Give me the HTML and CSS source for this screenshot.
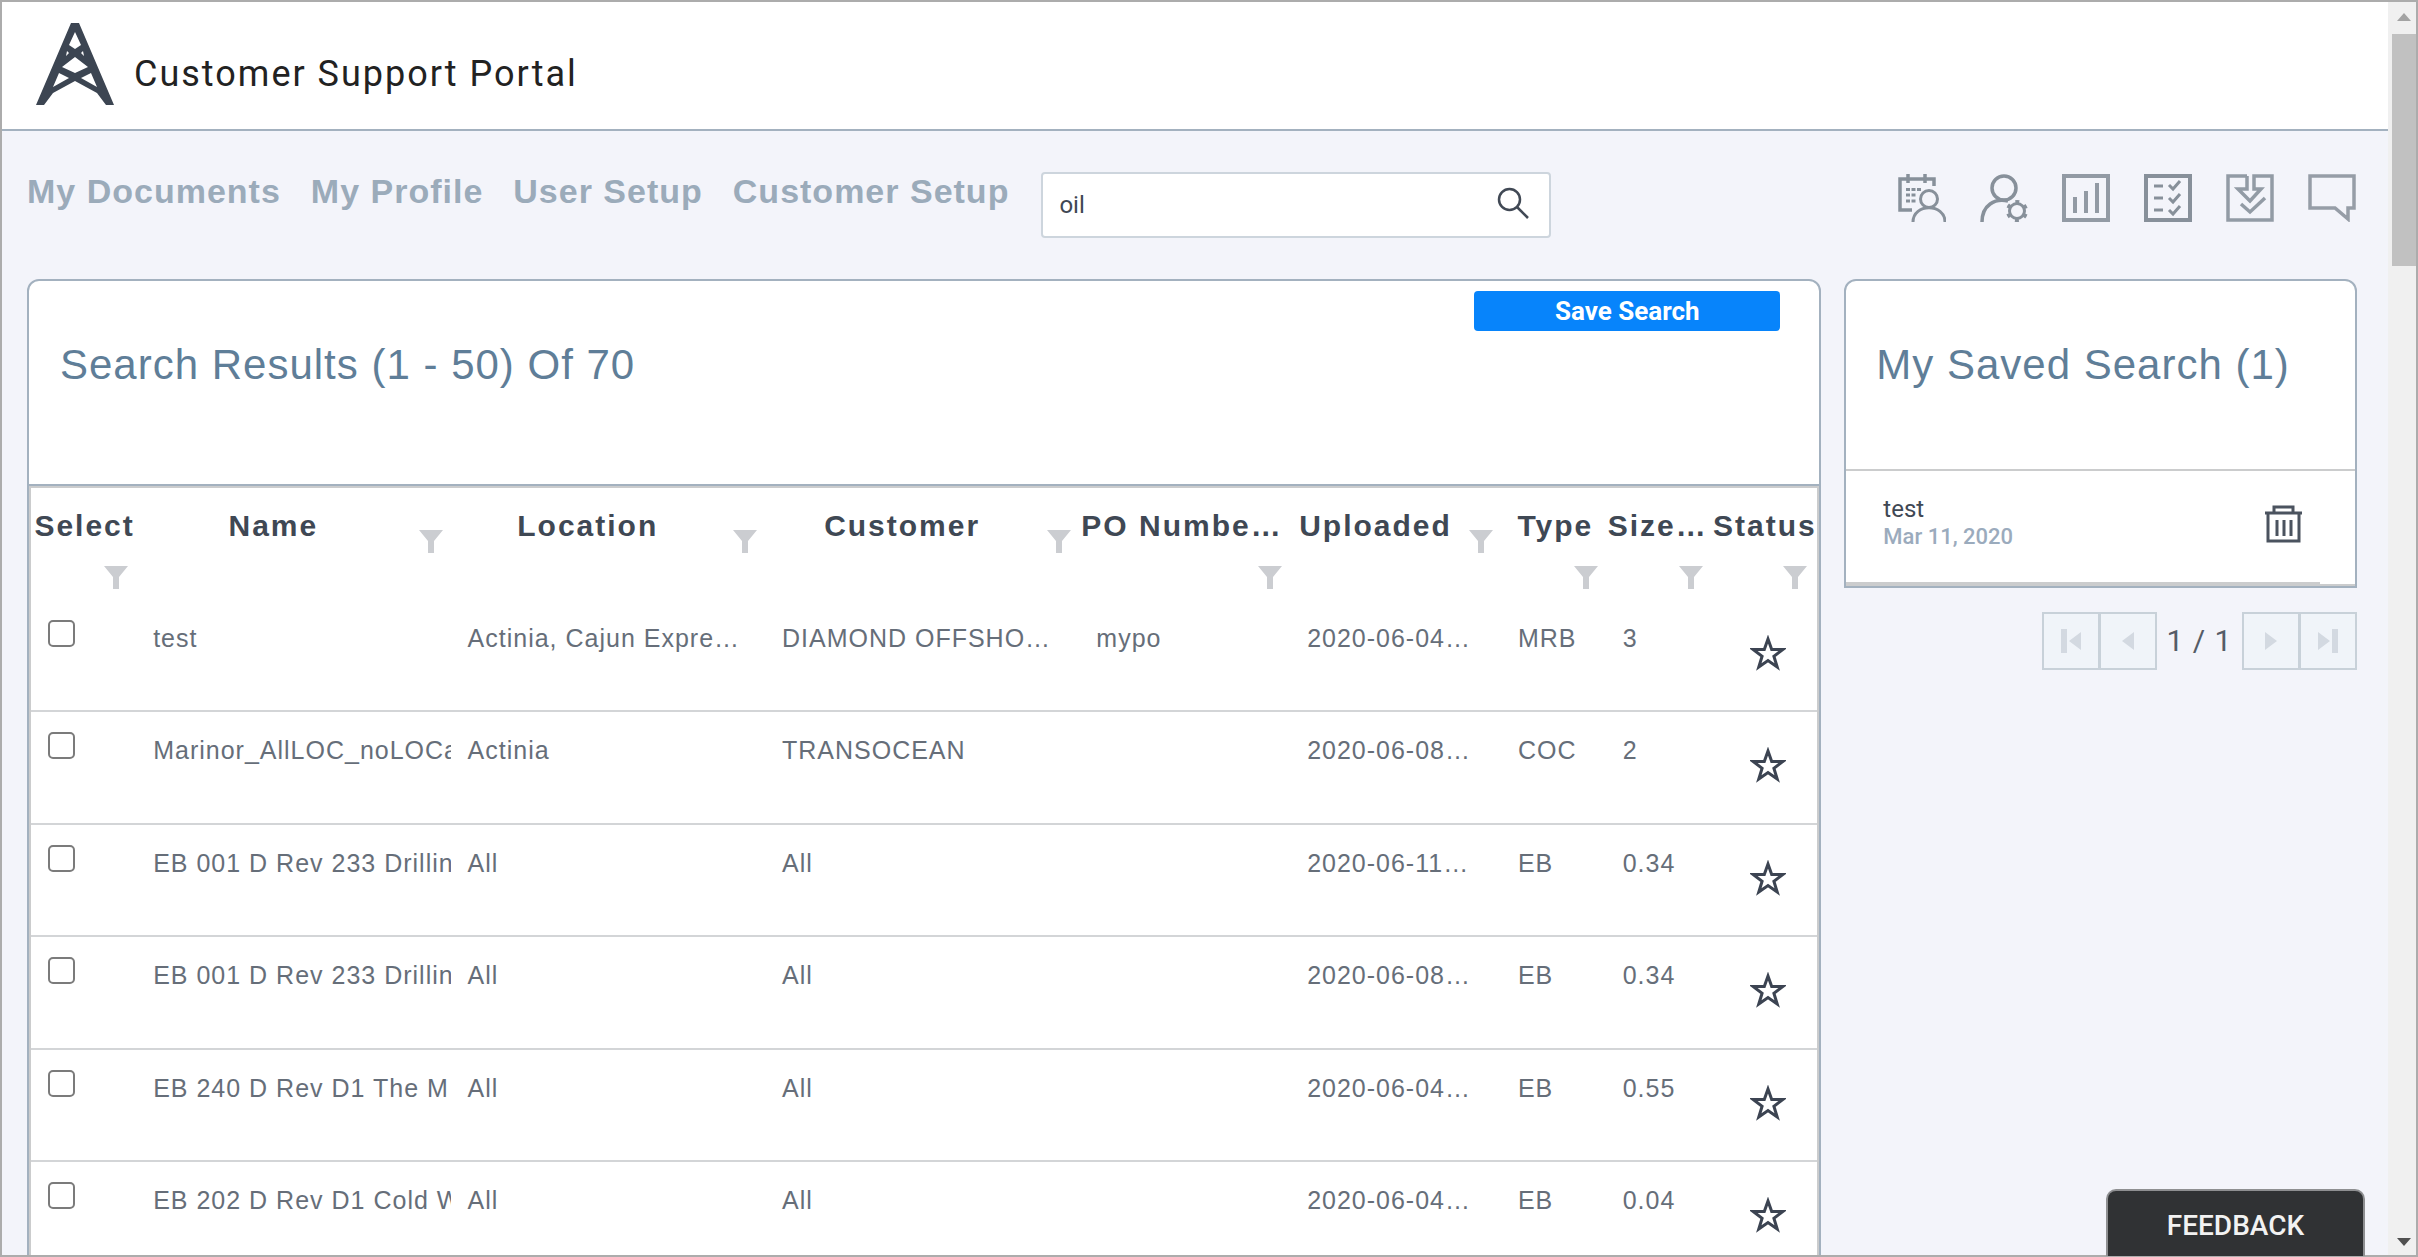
FILE: index.html
```html
<!DOCTYPE html>
<html lang="en">
<head>
<meta charset="utf-8">
<title>Customer Support Portal</title>
<link rel="stylesheet" href="styles.css">
</head>
<body>
<svg class="sprite" aria-hidden="true">
  <symbol id="funnel" viewBox="0 0 24 23"><path d="M0 0H24L15 11V23H9V11Z" fill="#cbcdd1"/></symbol>
  <symbol id="star" viewBox="0 0 36 36"><path d="M18 4L21.7 14.5H32.800L23.900 21.200L27.200 32L18 25.500L8.800 32L12.100 21.200L3.200 14.500H14.300Z" fill="none" stroke="#3c4452" stroke-width="3"/></symbol>
</svg>
<div class="window">
  <div class="page">
    <header class="brand">
      <svg class="logo" viewBox="0 0 78 82" aria-hidden="true">
        <path d="M35 0H43L78 82H70L61 70L39 58L17 70L8 82H0ZM39 9L33 22L39 26L45 22ZM31 28L30 33L33 30ZM47 28L45 30L48 33ZM39 34L26 44L39 50L52 44ZM23 50L17 64L33 55ZM55 50L45 55L61 64Z" fill="#3c4552" fill-rule="evenodd"/>
      </svg>
      <span class="brand-name">Customer Support Portal</span>
    </header>

    <div class="toolbar">
      <nav class="menu">
        <a href="#">My Documents</a>
        <a href="#">My Profile</a>
        <a href="#">User Setup</a>
        <a href="#">Customer Setup</a>
      </nav>
      <form class="search">
        <input type="text" value="oil" aria-label="Search">
        <button type="button" aria-label="Search">
          <svg viewBox="0 0 32 32" width="32" height="32"><g fill="none" stroke="#414955" stroke-width="2.500"><circle cx="12.500" cy="12.500" r="10.500"/><path d="M20 20L31 31"/></g></svg>
        </button>
      </form>
      <div class="tools">
        <button type="button" aria-label="Schedule"><svg viewBox="0 0 48 48"><g fill="none" stroke="#87909a" stroke-width="3"><path d="M14 36H2V5H36V12M10 0V9M27 0V9" stroke-width="3.500"/><circle cx="31" cy="25" r="8.500"/><path d="M15 48C15 29 47 29 47 48"/><path d="M8 15.500H23M8 21H18M8 27H18" stroke-dasharray="4 1.500"/></g></svg></button>
        <button type="button" aria-label="User settings"><svg viewBox="0 0 48 48"><g fill="none" stroke="#87909a" stroke-width="3.500"><ellipse cx="24" cy="14" rx="12" ry="12"/><path d="M2 48C2 31 15 24 28 27"/><circle cx="37" cy="37" r="7.500" stroke-width="3"/><circle cx="37" cy="37" r="9.500" stroke-width="3" stroke-dasharray="4 5.948" stroke-dashoffset="-2.974"/></g></svg></button>
        <button type="button" aria-label="Reports"><svg viewBox="0 0 48 48"><path d="M2 2H46V46H2ZM13 39V23M24 39V17M35 39V9" fill="none" stroke="#929aa4" stroke-width="4"/></svg></button>
        <button type="button" aria-label="Checklist"><svg viewBox="0 0 48 48"><path d="M2 2H46V46H2Z" fill="none" stroke="#87909a" stroke-width="4"/><path d="M10 12H19M10 24H19M10 36H19M25 11L29 15L36 7M25 24L29 28L36 20M25 36L29 40L36 32" fill="none" stroke="#87909a" stroke-width="3"/></svg></button>
        <button type="button" aria-label="Downloads"><svg viewBox="0 0 48 48"><path d="M21 2H2V46H46V2H28V15H35L24 27L12 15H21V2" fill="none" stroke="#929ba5" stroke-width="3.500"/><path d="M15 30L24 38L39 24" fill="none" stroke="#929ba5" stroke-width="3.500"/></svg></button>
        <button type="button" aria-label="Messages"><svg viewBox="0 0 48 48"><path d="M2 2H46V34H40V45L27 34H2Z" fill="none" stroke="#969da7" stroke-width="3.500"/></svg></button>
      </div>
    </div>

    <div class="columns">
      <main class="card">
        <div class="card-head">
          <h1>Search Results (1 - 50) Of 70</h1>
          <button type="button" class="save">Save Search</button>
        </div>
        <table class="results">
          <colgroup><col class="c-select"><col class="c-wide"><col class="c-wide"><col class="c-wide"><col class="c-mid"><col class="c-mid"><col class="c-small"><col class="c-small"><col class="c-small"></colgroup>
          <thead>
            <tr>
              <th scope="col"><div class="head stacked"><span>Select</span><svg><use href="#funnel"/></svg></div></th>
              <th scope="col"><div class="head"><span>Name</span><svg><use href="#funnel"/></svg></div></th>
              <th scope="col"><div class="head"><span>Location</span><svg><use href="#funnel"/></svg></div></th>
              <th scope="col"><div class="head"><span>Customer</span><svg><use href="#funnel"/></svg></div></th>
              <th scope="col"><div class="head stacked"><span class="cut">PO Numbe…</span><svg><use href="#funnel"/></svg></div></th>
              <th scope="col"><div class="head"><span>Uploaded</span><svg><use href="#funnel"/></svg></div></th>
              <th scope="col"><div class="head stacked"><span>Type</span><svg><use href="#funnel"/></svg></div></th>
              <th scope="col"><div class="head stacked"><span class="cut">Size…</span><svg><use href="#funnel"/></svg></div></th>
              <th scope="col"><div class="head stacked"><span>Status</span><svg><use href="#funnel"/></svg></div></th>
            </tr>
          </thead>
          <tbody>
            <tr><td><input type="checkbox" aria-label="Select test"></td><td><div>test</div></td><td>Actinia, Cajun Expre…</td><td>DIAMOND OFFSHO…</td><td>mypo</td><td>2020-06-04…</td><td>MRB</td><td>3</td><td><button type="button" class="star" aria-label="Favourite"><svg><use href="#star"/></svg></button></td></tr>
            <tr><td><input type="checkbox" aria-label="Select Marinor"></td><td><div>Marinor_AllLOC_noLOCa</div></td><td>Actinia</td><td>TRANSOCEAN</td><td></td><td>2020-06-08…</td><td>COC</td><td>2</td><td><button type="button" class="star" aria-label="Favourite"><svg><use href="#star"/></svg></button></td></tr>
            <tr><td><input type="checkbox" aria-label="Select EB 001"></td><td><div>EB 001 D Rev 233 Drillin</div></td><td>All</td><td>All</td><td></td><td>2020-06-11…</td><td>EB</td><td>0.34</td><td><button type="button" class="star" aria-label="Favourite"><svg><use href="#star"/></svg></button></td></tr>
            <tr><td><input type="checkbox" aria-label="Select EB 001"></td><td><div>EB 001 D Rev 233 Drillin</div></td><td>All</td><td>All</td><td></td><td>2020-06-08…</td><td>EB</td><td>0.34</td><td><button type="button" class="star" aria-label="Favourite"><svg><use href="#star"/></svg></button></td></tr>
            <tr><td><input type="checkbox" aria-label="Select EB 240"></td><td><div>EB 240 D Rev D1 The M</div></td><td>All</td><td>All</td><td></td><td>2020-06-04…</td><td>EB</td><td>0.55</td><td><button type="button" class="star" aria-label="Favourite"><svg><use href="#star"/></svg></button></td></tr>
            <tr><td><input type="checkbox" aria-label="Select EB 202"></td><td><div>EB 202 D Rev D1 Cold W</div></td><td>All</td><td>All</td><td></td><td>2020-06-04…</td><td>EB</td><td>0.04</td><td><button type="button" class="star" aria-label="Favourite"><svg><use href="#star"/></svg></button></td></tr>
          </tbody>
        </table>
      </main>

      <aside>
        <section class="card saved">
          <h2>My Saved Search (1)</h2>
          <div class="saved-list">
            <div class="saved-item">
              <div class="saved-text"><a href="#">test</a><time datetime="2020-03-11">Mar 11, 2020</time></div>
              <button type="button" aria-label="Delete"><svg viewBox="0 0 38 38" width="38" height="38"><path d="M3 9V36H34V9M0 8H37M9 8V2H28V8M12 15V31M19 15V31M26 15V31" fill="none" stroke="#4b535f" stroke-width="3"/></svg></button>
            </div>
          </div>
        </section>
        <nav class="pager" aria-label="Saved search pages">
          <button type="button" aria-label="First"><svg viewBox="0 0 20 24"><path d="M0 0H6V24H0ZM20 3V21L8 12Z"/></svg></button>
          <button type="button" aria-label="Previous"><svg viewBox="0 0 20 24"><path d="M16 3V21L4 12Z"/></svg></button>
          <span>1 / 1</span>
          <button type="button" aria-label="Next"><svg viewBox="0 0 20 24"><path d="M4 3V21L16 12Z"/></svg></button>
          <button type="button" aria-label="Last"><svg viewBox="0 0 20 24"><path d="M20 0H14V24H20ZM0 3V21L12 12Z"/></svg></button>
        </nav>
      </aside>
    </div>
  </div>
  <div class="scrollbar" aria-hidden="true">
    <svg class="idle" viewBox="0 0 14 8"><path d="M7 0L14 8H0Z"/></svg>
    <div class="thumb"></div>
    <svg viewBox="0 0 14 8"><path d="M7 8L14 0H0Z"/></svg>
  </div>
</div>
<button type="button" class="feedback">FEEDBACK</button>
</body>
</html>
```
FILE: styles.css
```css
* { box-sizing: border-box; }
body {
  margin: 0;
  font-family: "Liberation Sans", Arial, sans-serif;
  color: #3f4854;
  background: #f3f4fa;
}
button { padding: 0; border: 0; background: none; font: inherit; color: inherit; cursor: pointer; }
button svg { display: block; }
a { text-decoration: none; color: inherit; }
.sprite { display: none; }

.window {
  display: flex;
  height: 100vh;
  border: 2px solid #acacac;
  overflow: hidden;
}
.page { flex: 1; min-width: 0; overflow: hidden; }

.brand {
  display: flex;
  align-items: center;
  gap: 20px;
  height: 129px;
  padding: 0 34px 3px;
  background: #fff;
  border-bottom: 2px solid #a3b1bf;
}
.logo { width: 78px; height: 82px; }
.brand-name {
  padding-top: 20px;
  font-family: Roboto, sans-serif;
  font-size: 36px;
  letter-spacing: 2px;
  color: #222;
}

.toolbar {
  display: flex;
  align-items: flex-start;
  gap: 32px;
  height: 148px;
  padding: 41px 32px 0 25px;
}
.menu { display: flex; gap: 30px; font-size: 34px; line-height: 38px; font-weight: bold; letter-spacing: 1px; color: #9babba; white-space: nowrap; }
.search {
  display: flex;
  align-items: center;
  width: 510px;
  height: 66px;
  padding: 0 20px 0 16px;
  background: #fff;
  border: 2px solid #cdd5dd;
  border-radius: 4px;
}
.search input {
  flex: 1;
  min-width: 0;
  padding: 0;
  border: 0;
  outline: 0;
  background: none;
  font: 24px/30px Roboto, sans-serif;
  color: #3f4854;
}
.search button { padding-bottom: 4px; }
.tools { display: flex; gap: 34px; margin-left: auto; padding-top: 2px; }
.tools svg { width: 48px; height: 48px; }

.columns {
  display: grid;
  grid-template-columns: 7fr 2fr;
  gap: 23px;
  align-items: start;
  padding: 0 31px 0 25px;
}
.card {
  background: #fff;
  border: 2px solid #a3b1bf;
  border-radius: 12px 12px 0 0;
}
h1, h2 { margin: 0; font-size: 42px; line-height: 48px; font-weight: normal; letter-spacing: 1px; color: #5f7e98; white-space: nowrap; }
.card-head {
  display: flex;
  justify-content: space-between;
  height: 205px;
  padding: 10px 39px 0 31px;
  border-bottom: 2px solid #a3b1bf;
}
.card-head h1 { padding-top: 50px; }
.save {
  width: 306px;
  height: 40px;
  border-radius: 4px;
  background: #0784fb;
  color: #fff;
  font: bold 26px/40px Roboto, sans-serif;
}

.results {
  width: 100%;
  table-layout: fixed;
  border-collapse: separate;
  border-spacing: 0;
  border: solid #cbcccd;
  border-width: 2px 2px 0;
}
.c-select { width: 6%; }
.c-wide { width: 17.6%; }
.c-mid { width: 11.8%; }
.results th { height: 112px; padding: 20px 0 0; vertical-align: top; }
.head { display: flex; font-size: 30px; line-height: 36px; letter-spacing: 2px; }
.head span { flex: 1; text-align: center; white-space: nowrap; }
.head .cut { text-align: left; }
.head svg { flex: none; width: 24px; height: 23px; margin: 22px 10px 0; }
.stacked { flex-direction: column; }
.stacked svg { align-self: flex-end; }
.results td {
  height: 112px;
  padding: 22px 0 0 15px;
  vertical-align: top;
  border-bottom: 2px solid #d3d5d7;
  font-size: 25px;
  line-height: 32px;
  letter-spacing: 1px;
  color: #666e79;
  white-space: nowrap;
}
.results tr:nth-child(even) td { height: 113px; }
.results td div { margin-right: 2px; overflow: hidden; }
.results td:first-child { padding: 20px 0 0 17px; }
.results input {
  display: block;
  appearance: none;
  width: 27px;
  height: 27px;
  margin: 0;
  border: 2px solid #7b7b7b;
  border-radius: 5px;
  background: #fff;
}
.results input:checked { background: #0784fb; }
.star { display: block; margin: 13px 0 0 22px; }
.star svg { width: 36px; height: 36px; }

.saved h2 { height: 190px; padding: 60px 0 0 30px; border-bottom: 2px solid #cbcccd; }
.saved-list { border-bottom: 2px solid #cbcccd; }
.saved-item {
  display: flex;
  justify-content: space-between;
  align-items: flex-start;
  height: 113px;
  margin-right: 35px;
  padding: 24px 17px 0 37px;
  border-bottom: 2px solid #cbcccd;
}
.saved-item button { padding-top: 10px; }
.saved-text { display: grid; font: 24px/28px Roboto, sans-serif; }
.saved-text time { font-size: 22px; font-weight: 500; color: #9babbd; }

.pager { display: flex; justify-content: flex-end; align-items: center; margin-top: 24px; }
.pager button { display: grid; place-items: center; width: 58px; height: 58px; border: 2px solid #c8d1d9; background: #f0f4f9; }
.pager button + button { margin-left: -1px; }
.pager svg { width: 20px; height: 24px; fill: #d3d9e1; }
.pager span { width: 85px; text-align: center; font: 30px/36px Roboto, sans-serif; letter-spacing: 1px; color: #555c67; }

.scrollbar { display: flex; flex-direction: column; align-items: center; width: 28px; padding: 11px 0 9px 4px; background: #f0f0f0; }
.scrollbar svg { width: 14px; height: 8px; fill: #505050; }
.scrollbar .idle { fill: #a3a3a3; }
.thumb { width: 24px; height: 232px; margin: 13px 0 auto; background: #c1c1c1; }

.feedback {
  position: fixed;
  right: 53px;
  bottom: 1px;
  width: 259px;
  height: 67px;
  padding-top: 4px;
  border: 2px solid #8e8f91;
  border-bottom: 0;
  border-radius: 10px 10px 0 0;
  background: #303234;
  color: #f2f2f2;
  font: 500 28px/32px Roboto, sans-serif;
}
```
